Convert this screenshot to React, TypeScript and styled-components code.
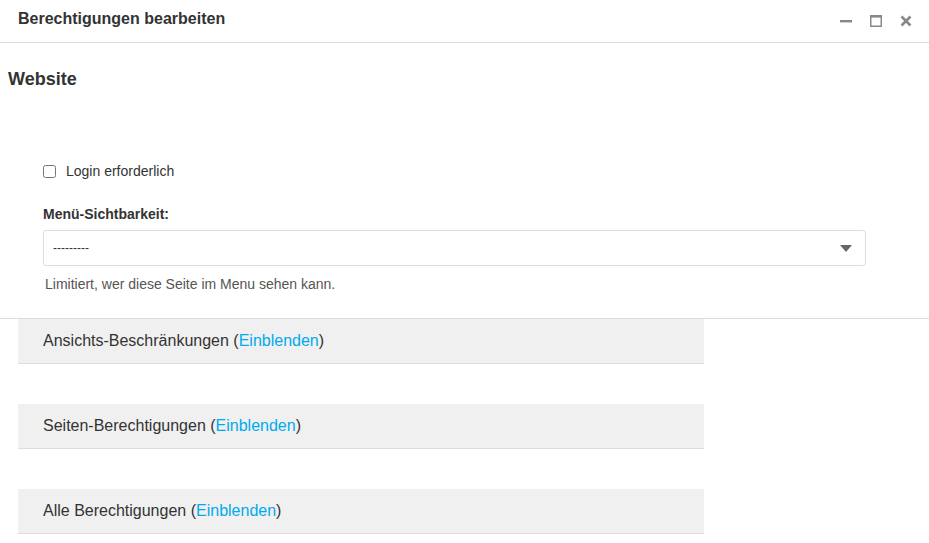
import styled, { createGlobalStyle } from "styled-components";

const GlobalStyle = createGlobalStyle`
  html, body {
    margin: 0;
    padding: 0;
    background: #fff;
    font-family: "Liberation Sans", Arial, sans-serif;
    color: #333;
  }
  * { box-sizing: border-box; }
`;

const sections = [
  "Ansichts-Beschränkungen",
  "Seiten-Berechtigungen",
  "Alle Berechtigungen",
];

export default function App() {
  return (
    <>
      <GlobalStyle />
      <Modal>
        <Header>
          <Title>Berechtigungen bearbeiten</Title>
          <Controls>
            <Control title="minimieren">
              <svg width="12" height="12" viewBox="0 0 12 12">
                <rect x="0" y="5" width="12" height="2.4" fill="#888" />
              </svg>
            </Control>
            <Control title="maximieren">
              <svg width="12" height="12" viewBox="0 0 12 12">
                <rect x="0.75" y="0.75" width="10.5" height="10.5" fill="none" stroke="#888" strokeWidth="1.5" />
                <rect x="0" y="0" width="12" height="2.6" fill="#888" />
              </svg>
            </Control>
            <Control title="schließen">
              <svg width="12" height="12" viewBox="0 0 12 12">
                <path d="M1.5 1.5 L10.5 10.5 M10.5 1.5 L1.5 10.5" stroke="#888" strokeWidth="2.6" />
              </svg>
            </Control>
          </Controls>
        </Header>

        <Body>
          <Heading>Website</Heading>

          <Form>
            <CheckRow>
              <Checkbox type="checkbox" />
              <span>Login erforderlich</span>
            </CheckRow>

            <FieldLabel>Menü-Sichtbarkeit:</FieldLabel>
            <SelectBox>
              <span>---------</span>
              <Caret />
            </SelectBox>
            <Help>Limitiert, wer diese Seite im Menu sehen kann.</Help>
          </Form>

          <Sections>
            {sections.map((name) => (
              <Collapse key={name}>
                {name} (<Toggle href="#">Einblenden</Toggle>)
              </Collapse>
            ))}
          </Sections>
        </Body>
      </Modal>
    </>
  );
}

const Modal = styled.div`
  width: 929px;
  height: 543px;
  overflow: hidden;
  background: #fff;
`;

const Header = styled.div`
  display: flex;
  align-items: center;
  justify-content: space-between;
  height: 43px;
  padding: 0 17px 5px 18px;
  border-bottom: 1px solid #ddd;
`;

const Title = styled.h1`
  margin: 0;
  font-size: 16px;
  font-weight: bold;
  color: #333;
`;

const Controls = styled.div`
  display: flex;
  align-items: center;
  gap: 18px;
  padding-top: 4px;
`;

const Control = styled.span`
  display: flex;
  width: 12px;
  height: 12px;
  cursor: pointer;
`;

const Body = styled.div`
  padding-top: 26px;
`;

const Heading = styled.h2`
  margin: 0;
  padding-left: 8px;
  font-size: 18px;
  font-weight: bold;
  color: #333;
  line-height: 20px;
`;

const Form = styled.div`
  display: flex;
  flex-direction: column;
  padding: 74px 63px 26px 43px;
  border-bottom: 1px solid #ddd;
`;

const CheckRow = styled.label`
  display: flex;
  align-items: center;
  gap: 10px;
  font-size: 14px;
  color: #333;
  height: 16px;
`;

const Checkbox = styled.input`
  margin: 0;
  width: 13px;
  height: 13px;
`;

const FieldLabel = styled.div`
  margin-top: 27px;
  font-size: 14px;
  font-weight: bold;
  color: #333;
  line-height: 16px;
`;

const SelectBox = styled.div`
  display: flex;
  align-items: center;
  justify-content: space-between;
  margin-top: 8px;
  height: 36px;
  padding: 0 13px 0 9px;
  border: 1px solid #ddd;
  border-radius: 3px;
  font-size: 12px;
  color: #333;
`;

const Caret = styled.span`
  width: 0;
  height: 0;
  border-left: 6px solid transparent;
  border-right: 6px solid transparent;
  border-top: 7px solid #666;
`;

const Help = styled.div`
  margin-top: 10px;
  padding-left: 2px;
  font-size: 14px;
  color: #555;
  line-height: 16px;
`;

const Sections = styled.div`
  display: flex;
  flex-direction: column;
  gap: 40px;
  padding-left: 18px;
`;

const Collapse = styled.div`
  display: flex;
  align-items: center;
  width: 686px;
  height: 45px;
  padding-left: 25px;
  background: #f0f0f0;
  border-bottom: 1px solid #ddd;
  font-size: 16px;
  color: #333;
  white-space: pre;
`;

const Toggle = styled.a`
  color: #00aaee;
  text-decoration: none;
`;
